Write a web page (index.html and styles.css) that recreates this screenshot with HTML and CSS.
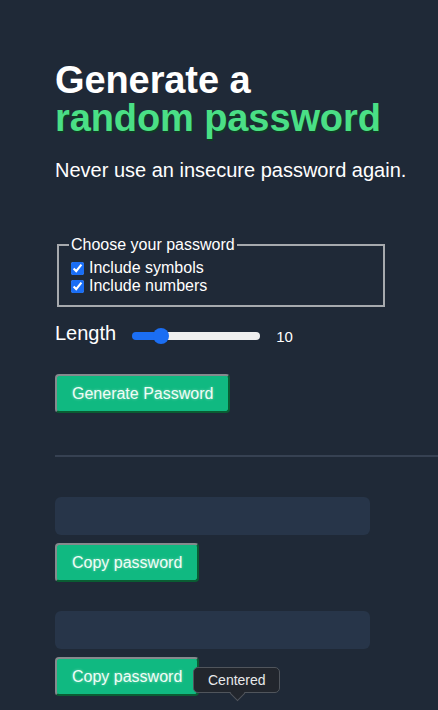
FILE: index.html
```html
<!DOCTYPE html>
<html lang="en">
<head>
<meta charset="utf-8">
<title>Password Generator</title>
<link rel="stylesheet" href="styles.css">
</head>
<body>
<main class="app">
  <h1 class="title">Generate a<br><span class="accent">random password</span></h1>
  <p class="subtitle">Never use an insecure password again.</p>

  <fieldset class="options">
    <legend class="options-legend">Choose your password</legend>
    <label class="option"><input type="checkbox" class="check" checked>Include symbols</label>
    <label class="option"><input type="checkbox" class="check" checked>Include numbers</label>
  </fieldset>

  <div class="length-row">
    <span class="length-label">Length</span>
    <input type="range" class="slider" min="1" max="50" value="10" style="background: linear-gradient(to right, #1b6ef3 0%, #1b6ef3 22%, #efefef 22%, #efefef 100%);">
    <span class="length-value">10</span>
  </div>

  <button class="btn btn-generate">Generate Password</button>

  <hr class="divider">

  <div class="result">
    <div class="pw-box"></div>
    <button class="btn">Copy password</button>
  </div>
  <div class="result">
    <div class="pw-box"></div>
    <div class="copy-wrap">
      <button class="btn">Copy password</button>
      <div class="tooltip">Centered</div>
    </div>
  </div>
</main>
</body>
</html>
```
FILE: styles.css
```css
* { box-sizing: border-box; }

html, body {
  margin: 0;
  padding: 0;
  background: #1f2937;
  height: 100%;
}

body {
  font-family: "Liberation Sans", Arial, sans-serif;
  color: #ffffff;
  overflow: hidden;
}

.app {
  padding: 61px 0 0 55px;
}

.title {
  margin: 0;
  font-size: 38px;
  line-height: 38px;
  font-weight: 700;
  color: #ffffff;
  letter-spacing: -0.1px;
}

.accent {
  color: #4adf86;
  text-shadow: 1px 2px 0 #0f3d24;
}

.subtitle {
  margin: 21px 0 0;
  font-size: 20px;
  line-height: 24px;
  color: #ffffff;
}

.options {
  margin: 54px 2px 0;
  width: 328px;
  padding: 0 12px 10px;
  border: 2px solid #a6a9ad;
  display: flex;
  flex-direction: column;
}

.options-legend {
  padding: 0 2px;
  margin-left: -2px;
  font-size: 16px;
  line-height: 18px;
  color: #ffffff;
}

.option {
  display: flex;
  align-items: center;
  font-size: 16px;
  line-height: 18px;
  color: #ffffff;
}

.option:first-of-type {
  margin-top: 5px;
}

.check {
  width: 13px;
  height: 13px;
  margin: 0 5px 0 0;
  accent-color: #1a6ef5;
}

.length-row {
  display: flex;
  align-items: flex-start;
  margin-top: 14px;
}

.length-label {
  font-size: 20px;
  line-height: 24px;
}

.slider {
  -webkit-appearance: none;
  appearance: none;
  width: 128px;
  height: 8px;
  margin: 11px 0 0 16px;
  border-radius: 4px;
  outline: none;
}

.slider::-webkit-slider-thumb {
  -webkit-appearance: none;
  appearance: none;
  width: 16px;
  height: 16px;
  border-radius: 50%;
  background: #1b6ef3;
  border: none;
  cursor: pointer;
}

.length-value {
  margin: 7px 0 0 16px;
  font-size: 15px;
  line-height: 18px;
}

.btn {
  display: block;
  font-family: "Liberation Sans", Arial, sans-serif;
  font-size: 16px;
  line-height: 18px;
  padding: 9px 15px 8px 15px;
  background: #10b981;
  color: #f0fdf6;
  text-shadow: 0 0 3px rgba(255, 255, 255, 0.45);
  border-width: 2px;
  border-style: solid;
  border-color: #858a8d #0a5d33 #0a5d33 #858a8d;
  border-radius: 4px;
  cursor: pointer;
}

.btn-generate {
  margin-top: 28px;
}

.divider {
  margin: 42px 0 0;
  border: none;
  height: 2px;
  background: #364152;
}

.result {
  margin-top: 40px;
}

.result + .result {
  margin-top: 29px;
}

.pw-box {
  width: 315px;
  height: 38px;
  border-radius: 6px;
  background: #273549;
  margin-bottom: 8px;
}

.copy-wrap {
  position: relative;
  width: max-content;
}

.tooltip {
  position: absolute;
  left: 138px;
  top: 10px;
  width: 87px;
  height: 26px;
  padding: 0 0 0 14px;
  background: #22262d;
  border: 1px solid #50555c;
  border-radius: 5px;
  color: #e8e9eb;
  font-size: 14px;
  line-height: 24px;
  white-space: nowrap;
}

.tooltip::after {
  content: "";
  position: absolute;
  left: 38px;
  bottom: -7px;
  width: 10px;
  height: 10px;
  background: #22262d;
  border-right: 1px solid #50555c;
  border-bottom: 1px solid #50555c;
  transform: rotate(45deg);
}
```
